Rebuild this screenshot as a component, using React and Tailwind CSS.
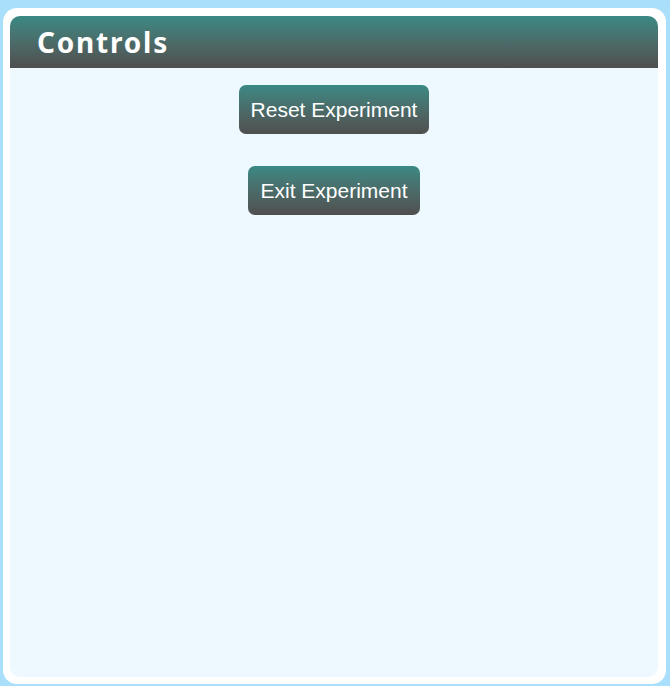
import React from "react";

export default function App() {
  return (
    <div className="w-[670px] h-[686px] bg-[#a9dffa] pt-[8px] pl-[3px] overflow-hidden">
      <div className="w-[663px] h-[676px] bg-white rounded-[14px] pt-[8px] pl-[7px] pr-[8px] pb-[7px]">
        <div className="h-full bg-[#eef8ff] rounded-[10px] overflow-hidden flex flex-col">
          <div className="h-[52px] shrink-0 bg-gradient-to-b from-[#3a8984] to-[#4f4f4f] flex items-center pl-[27px]">
            <h2 className="text-white text-[28px] font-bold tracking-[1.8px] font-['Noto_Sans',sans-serif] leading-none">
              Controls
            </h2>
          </div>
          <div className="flex flex-col items-center pt-[17px] gap-[32px] font-['Liberation_Sans',Arial,sans-serif]">
            <button className="h-[49px] px-[12px] flex items-center text-[21px] text-white rounded-[7px] bg-gradient-to-b from-[#3a8984] to-[#4f4f4f]">
              Reset Experiment
            </button>
            <button className="h-[49px] px-[12px] flex items-center text-[21px] text-white rounded-[7px] bg-gradient-to-b from-[#3a8984] to-[#4f4f4f]">
              Exit Experiment
            </button>
          </div>
        </div>
      </div>
    </div>
  );
}
